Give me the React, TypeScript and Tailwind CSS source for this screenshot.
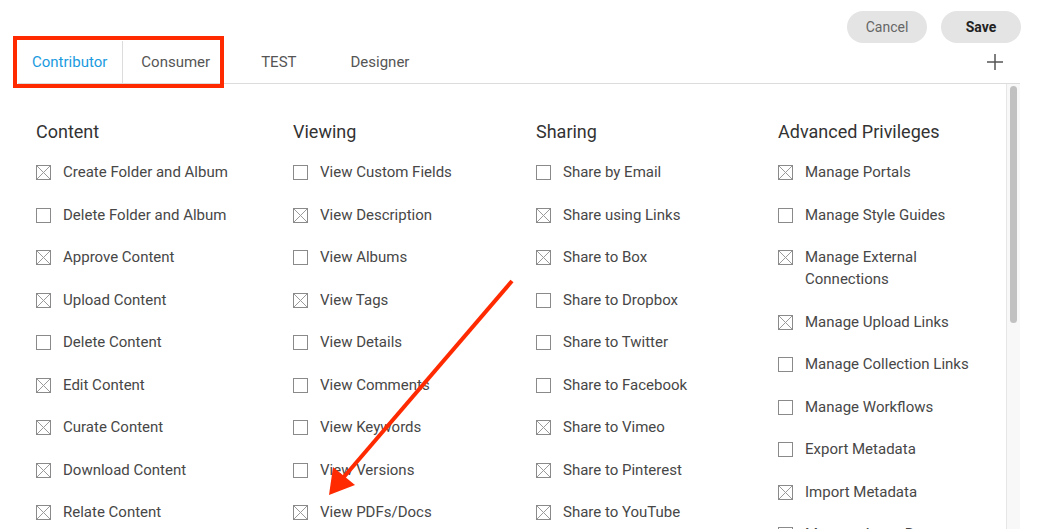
import React from 'react';

type Perm = { label: string; on: boolean };

const columns: { title: string; width: string; items: Perm[] }[] = [
  {
    title: 'Content',
    width: 'w-[257px]',
    items: [
      { label: 'Create Folder and Album', on: true },
      { label: 'Delete Folder and Album', on: false },
      { label: 'Approve Content', on: true },
      { label: 'Upload Content', on: true },
      { label: 'Delete Content', on: false },
      { label: 'Edit Content', on: true },
      { label: 'Curate Content', on: true },
      { label: 'Download Content', on: true },
      { label: 'Relate Content', on: true },
    ],
  },
  {
    title: 'Viewing',
    width: 'w-[243px]',
    items: [
      { label: 'View Custom Fields', on: false },
      { label: 'View Description', on: true },
      { label: 'View Albums', on: false },
      { label: 'View Tags', on: true },
      { label: 'View Details', on: false },
      { label: 'View Comments', on: false },
      { label: 'View Keywords', on: false },
      { label: 'View Versions', on: false },
      { label: 'View PDFs/Docs', on: true },
    ],
  },
  {
    title: 'Sharing',
    width: 'w-[242px]',
    items: [
      { label: 'Share by Email', on: false },
      { label: 'Share using Links', on: true },
      { label: 'Share to Box', on: true },
      { label: 'Share to Dropbox', on: false },
      { label: 'Share to Twitter', on: false },
      { label: 'Share to Facebook', on: false },
      { label: 'Share to Vimeo', on: true },
      { label: 'Share to Pinterest', on: true },
      { label: 'Share to YouTube', on: true },
    ],
  },
  {
    title: 'Advanced Privileges',
    width: 'w-[200px]',
    items: [
      { label: 'Manage Portals', on: true },
      { label: 'Manage Style Guides', on: false },
      { label: 'Manage External Connections', on: true },
      { label: 'Manage Upload Links', on: true },
      { label: 'Manage Collection Links', on: false },
      { label: 'Manage Workflows', on: false },
      { label: 'Export Metadata', on: false },
      { label: 'Import Metadata', on: true },
      { label: 'Manage Asset Requests', on: false },
    ],
  },
];

const Box = ({ on }: { on: boolean }) => (
  <span className="mt-[4px] w-[15px] h-[15px] shrink-0 border border-[#8a8a8a] bg-white relative">
    {on && (
      <svg className="absolute inset-0" width="13" height="13" viewBox="0 0 13 13">
        <path d="M0 0L13 13M13 0L0 13" stroke="#9a9a9a" strokeWidth="1" />
      </svg>
    )}
  </span>
);

export default function App() {
  return (
    <div className="relative w-[1056px] h-[529px] overflow-hidden bg-white font-['Roboto',sans-serif] text-[#444]">
      {/* actions */}
      <div className="flex justify-end gap-[14px] pt-[11px] pr-[35px]">
        <button className="w-[80px] h-[32px] rounded-full bg-[#e4e4e4] text-[14px] text-[#666]">Cancel</button>
        <button className="w-[80px] h-[32px] rounded-full bg-[#e4e4e4] text-[14px] font-bold text-[#222]">Save</button>
      </div>

      {/* tabs */}
      <div className="flex items-stretch h-[42px] mt-[-2px] ml-[18px] mr-[36px] text-[15px]">
        <div className="flex items-center pl-[14px] pr-[15px] border-r border-[#dcdcdc] text-[#1a9be0]">Contributor</div>
        <div className="flex items-center pl-[18px] pr-[12px] text-[#555]">Consumer</div>
        <div className="flex items-center ml-[39px] text-[#555]">TEST</div>
        <div className="flex items-center ml-[54px] text-[#555]">Designer</div>
        <div className="flex-1" />
        <div className="flex items-center pr-[17px]">
          <svg width="16" height="16" viewBox="0 0 16 16">
            <path d="M8 0V16M0 8H16" stroke="#555" strokeWidth="1.5" />
          </svg>
        </div>
      </div>

      {/* panel */}
      <div className="flex ml-[18px] mr-[36px] h-[446px] border-t border-[#dcdcdc]">
        <div className="flex-1 flex pl-[18px] pt-[36px]">
          {columns.map((col) => (
            <div key={col.title} className={`${col.width} shrink-0`}>
              <div className="text-[18px] leading-[24px] text-[#333]">{col.title}</div>
              <div className="flex flex-col gap-[20.5px] mt-[17px]">
                {col.items.map((it) => (
                  <div key={it.label} className="flex items-start gap-[12px] text-[15px] leading-[22px]">
                    <Box on={it.on} />
                    <span className="text-[#474747]">{it.label}</span>
                  </div>
                ))}
              </div>
            </div>
          ))}
        </div>
        <div className="w-[14px] shrink-0 bg-[#f8f8f8] border-l border-[#e6e6e6] pt-[2px] flex justify-center">
          <div className="w-[7px] h-[237px] rounded-full bg-[#c1c1c1]" />
        </div>
      </div>

      {/* annotation: red box around first two tabs */}
      <div className="absolute left-[13px] top-[36px] w-[211px] h-[52px] border-[4px] border-[#ff2a00] pointer-events-none" />

      {/* annotation: arrow */}
      <svg className="absolute left-0 top-0 pointer-events-none" width="1056" height="529">
        <path d="M512 281L343 478" stroke="#ff2a00" strokeWidth="4" strokeLinecap="butt" />
        <path d="M329 495L333 467L355 485Z" fill="#ff2a00" />
      </svg>
    </div>
  );
}
